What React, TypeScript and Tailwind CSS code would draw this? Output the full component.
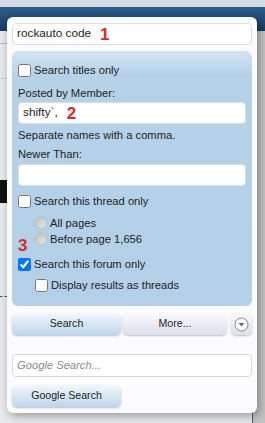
import React from "react";

const red = "text-[#d62a2f]";

function Check({ checked = false }: { checked?: boolean }) {
  return (
    <input
      type="checkbox"
      defaultChecked={checked}
      className="m-0 h-[13px] w-[13px] shrink-0"
    />
  );
}

function Radio() {
  return (
    <span className="block h-[12px] w-[12px] shrink-0 rounded-full border border-[#bdbdbd] bg-gradient-to-br from-[#c2c2c2] to-[#e8e8e8]" />
  );
}

function Field({ children }: { children?: React.ReactNode }) {
  return (
    <div className="flex h-[22px] items-center rounded-[4px] border border-[#d9dee4] bg-white px-[4px] text-[11.8px]">
      {children}
    </div>
  );
}

export default function App() {
  return (
    <div className="relative flex h-[423px] w-[265px] flex-col overflow-hidden font-['Liberation_Sans',Arial,sans-serif] text-[#1e1e1e]">
      {/* page behind */}
      <div className="h-[7px] bg-[#d5dce5]" />
      <div className="h-[24px] bg-gradient-to-b from-[#2c5d8a] to-[#173d61]" />
      <div className="flex flex-1">
        <div className="flex flex-1 flex-col border-r border-[#5a5a5a] bg-[#e8eaed]">
          <div className="mt-[12px] h-px w-[7px] bg-[#b9bfc6]" />
          <div className="mt-[34px] h-px w-[7px] bg-[#c9ced4]" />
          <div className="mt-[101px] h-[23px] w-[7px] bg-[#111]" />
          <div className="mt-[93px] w-[7px] border-t border-dashed border-[#555]" />
        </div>
        <div className="w-[12px] bg-[#c2c2c2]" />
      </div>

      {/* search popup */}
      <div className="absolute left-[7px] top-[17px] flex w-[250px] flex-col rounded-[6px] bg-[#fcfcfe] px-[5px] pb-[6px] pt-[6px] shadow-[2px_3px_10px_rgba(0,0,0,0.35)]">
        <Field>
          <span>rockauto code</span>
          <span className={`ml-[9px] text-[17px] font-bold leading-none ${red}`}>1</span>
        </Field>

        <div className="relative mt-[6px] flex flex-col rounded-[6px] bg-gradient-to-b from-[#d3e3f1] via-[#b6d2e9] via-[24px] to-[#b3d0e8] px-[6px] pb-[13px] pt-[11px] text-[11.2px]">
          <label className="flex h-[16px] items-center gap-[3px]">
            <Check />
            <span>Search titles only</span>
          </label>

          <div className="mt-[7px] h-[16px] leading-[16px]">Posted by Member:</div>
          <div className="mt-[1px]">
            <Field>
              <span>shifty`,</span>
              <span className={`ml-[9px] text-[17px] font-bold leading-none ${red}`}>2</span>
            </Field>
          </div>
          <div className="mt-[3px] h-[16px] leading-[16px]">Separate names with a comma.</div>
          <div className="mt-[3px] h-[16px] leading-[16px]">Newer Than:</div>
          <div className="mt-[2px]">
            <Field />
          </div>

          <label className="mt-[7px] flex h-[16px] items-center gap-[3px]">
            <Check />
            <span>Search this thread only</span>
          </label>
          <div className="mt-[6px] flex h-[16px] items-center gap-[3px] pl-[17px]">
            <Radio />
            <span>All pages</span>
          </div>
          <div className="flex h-[16px] items-center gap-[3px] pl-[17px]">
            <Radio />
            <span>Before page 1,656</span>
          </div>

          <span className={`absolute left-[6px] top-[186px] text-[17px] font-bold leading-none ${red}`}>3</span>

          <label className="mt-[9px] flex h-[16px] items-center gap-[3px]">
            <Check checked />
            <span>Search this forum only</span>
          </label>
          <label className="mt-[5px] flex h-[16px] items-center gap-[3px] pl-[17px]">
            <Check />
            <span>Display results as threads</span>
          </label>
        </div>

        <div className="mt-[7px] flex h-[22px] gap-[2px] text-[10.6px]">
          <div className="flex w-[109px] items-center justify-center rounded-[5px] bg-gradient-to-b from-[#f3f7fb] to-[#bcd6ec] shadow-[0_1px_2px_rgba(0,0,0,0.25)]">
            Search
          </div>
          <div className="flex w-[104px] items-center justify-center rounded-[5px] bg-gradient-to-b from-[#fbfbfd] to-[#dddfea] shadow-[0_1px_2px_rgba(0,0,0,0.25)]">
            More...
          </div>
          <div className="ml-[2px] flex flex-1 items-center justify-center rounded-[5px] bg-gradient-to-b from-[#fbfbfd] to-[#dddfea] shadow-[0_1px_2px_rgba(0,0,0,0.25)]">
            <svg width="15" height="15" viewBox="0 0 15 15">
              <circle cx="7.5" cy="7.5" r="6.5" fill="#fff" stroke="#8a8a8a" strokeWidth="1" />
              <path d="M4.5 6 L10.5 6 L7.5 9.5 Z" fill="#6a6a6a" />
            </svg>
          </div>
        </div>

        <div className="mt-[19px]">
          <div className="flex h-[23px] items-center rounded-[4px] border border-[#d5d8dc] bg-white px-[4px] text-[11.2px] italic text-[#8c8c8c]">
            Google Search...
          </div>
        </div>

        <div className="mt-[8px] flex h-[22px] w-[109px] items-center justify-center rounded-[5px] bg-gradient-to-b from-[#f3f7fb] to-[#bcd6ec] text-[10.6px] shadow-[0_1px_2px_rgba(0,0,0,0.25)]">
          Google Search
        </div>
      </div>
    </div>
  );
}
